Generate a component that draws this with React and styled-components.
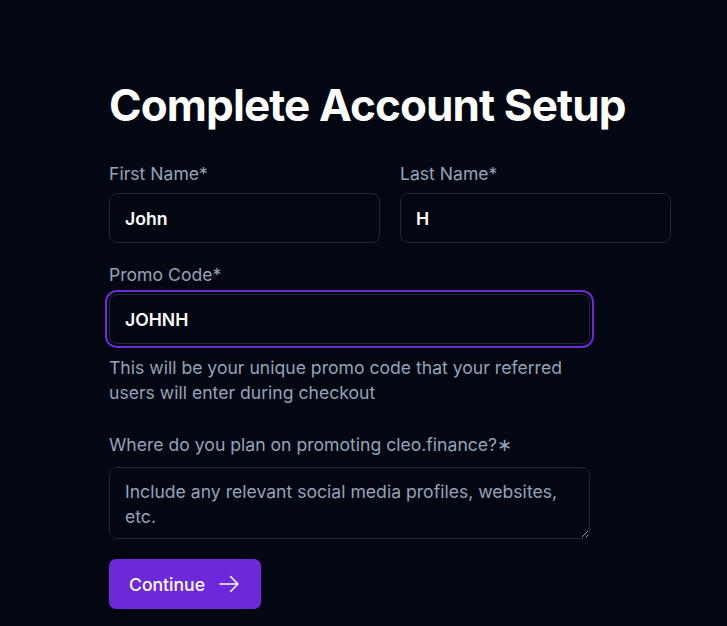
import React from "react";
import styled, { createGlobalStyle } from "styled-components";

const Global = createGlobalStyle`
  html, body { margin: 0; padding: 0; background: #030712; }
  body { font-family: Inter, "Noto Sans", sans-serif; color: #fff; }
  * { box-sizing: border-box; }
`;

const Page = styled.div`
  min-height: 626px;
  background: #030712;
  padding: 80px 0 0 109px;
`;

const Title = styled.h1`
  margin: 0 0 32px 0;
  font-size: 44px;
  line-height: 50px;
  font-weight: 700;
  letter-spacing: -0.02em;
  color: #fff;
`;

const NameRow = styled.div`
  display: grid;
  grid-template-columns: 271px 271px;
  column-gap: 20px;
  margin-bottom: 20px;
`;

const Field = styled.div`
  display: flex;
  flex-direction: column;
  width: ${(p) => (p.$wide ? "481px" : "auto")};
`;

const Label = styled.label`
  font-size: 17.6px;
  line-height: 24px;
  color: #94a3b8;
  margin-bottom: ${(p) => p.$mb ?? 7}px;
`;

const Input = styled.input`
  height: 50px;
  width: 100%;
  background: #030712;
  border: 1px solid #1f2937;
  border-radius: 8px;
  padding: 0 15px;
  font-family: inherit;
  font-size: 17.6px;
  font-weight: 600;
  color: #fff;
  outline: none;
  box-shadow: ${(p) =>
    p.$focused ? "0 0 0 2px #030712, 0 0 0 4px #6d28d9" : "none"};
`;

const Help = styled.p`
  margin: 11px 0 28px 0;
  width: 481px;
  font-size: 17.6px;
  line-height: 25px;
  color: #94a3b8;
`;

const TextArea = styled.textarea`
  width: 481px;
  height: 72px;
  background: #030712;
  border: 1px solid #1f2937;
  border-radius: 8px;
  padding: 11px 15px;
  font-family: inherit;
  font-size: 17.6px;
  line-height: 25px;
  color: #fff;
  outline: none;
  display: block;
  &::placeholder { color: #94a3b8; }
`;

const Button = styled.button`
  margin-top: 20px;
  height: 50px;
  padding: 0 20px;
  display: inline-flex;
  align-items: center;
  gap: 12px;
  background: #6d28d9;
  border: none;
  border-radius: 7px;
  color: #fff;
  font-family: inherit;
  font-size: 17.6px;
  font-weight: 500;
  cursor: pointer;
`;

const Arrow = () => (
  <svg width="24" height="24" viewBox="0 0 24 24" fill="none" stroke="currentColor" strokeWidth="1.5" strokeLinecap="round" strokeLinejoin="round">
    <path d="M13.5 4.5 21 12m0 0-7.5 7.5M21 12H3" />
  </svg>
);

export default function App() {
  return (
    <>
      <Global />
      <Page>
        <Title>Complete Account Setup</Title>
        <NameRow>
          <Field>
            <Label>First Name*</Label>
            <Input defaultValue="John" />
          </Field>
          <Field>
            <Label>Last Name*</Label>
            <Input defaultValue="H" />
          </Field>
        </NameRow>
        <Field $wide>
          <Label>Promo Code*</Label>
          <Input $focused defaultValue="JOHNH" />
        </Field>
        <Help>This will be your unique promo code that your referred users will enter during checkout</Help>
        <Field $wide>
          <Label $mb={10}>Where do you plan on promoting cleo.finance?∗</Label>
          <TextArea placeholder="Include any relevant social media profiles, websites, etc." />
        </Field>
        <Button>
          Continue
          <Arrow />
        </Button>
      </Page>
    </>
  );
}
